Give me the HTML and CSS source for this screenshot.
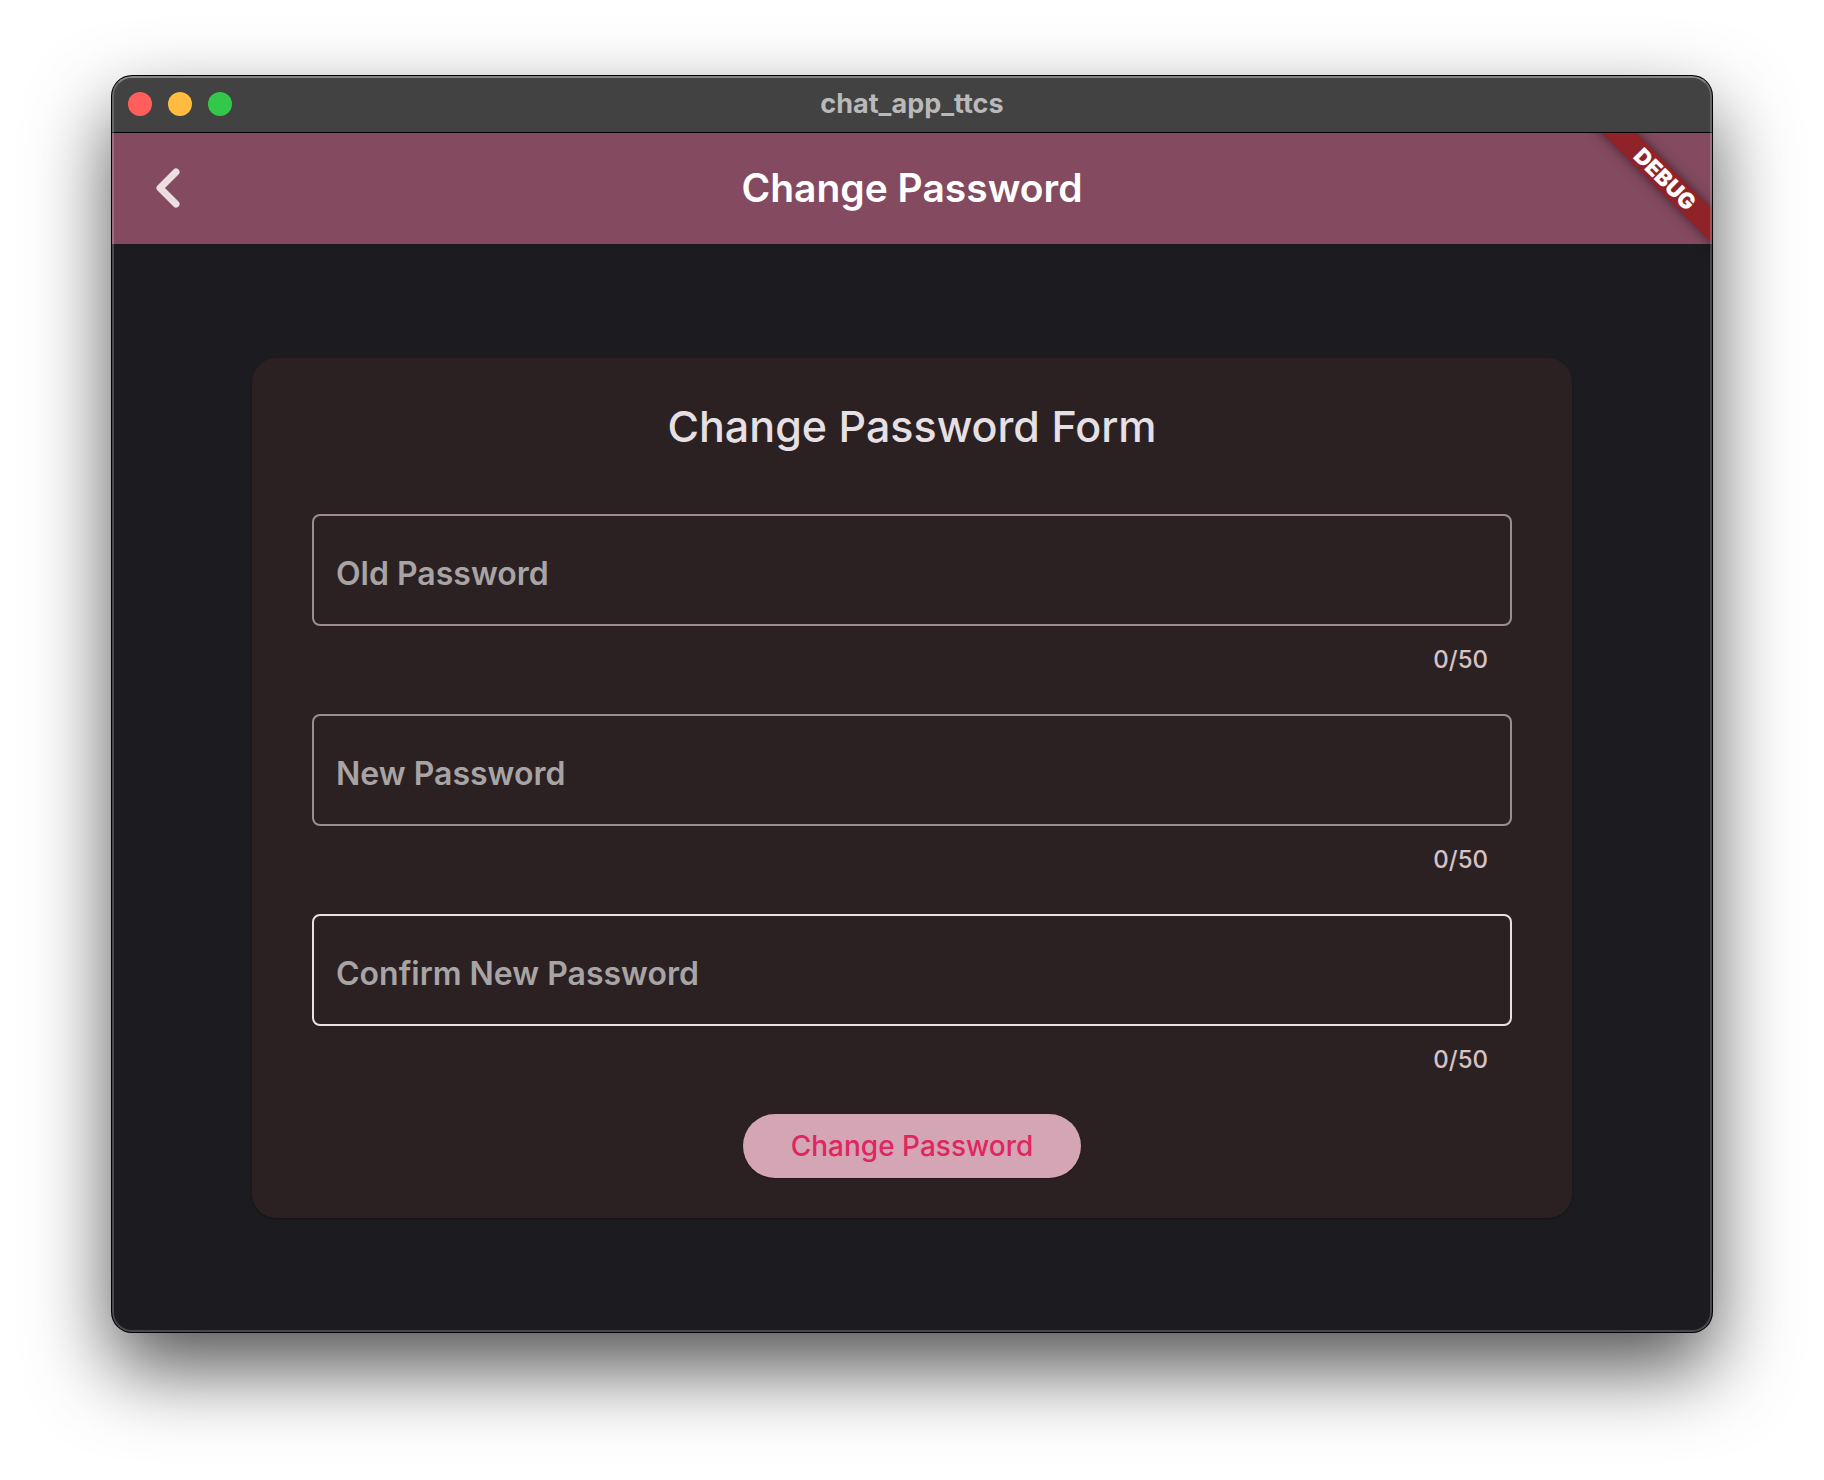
FILE: index.html
```html
<!DOCTYPE html>
<html lang="en">
<head>
  <meta charset="utf-8">
  <meta name="viewport" content="width=device-width, initial-scale=1">
  <title>chat_app_ttcs</title>
  <link rel="stylesheet" href="styles.css">
</head>
<body>
  <div class="window">
    <header class="titlebar">
      <div class="lights">
        <span class="light light--close"></span>
        <span class="light light--minimize"></span>
        <span class="light light--zoom"></span>
      </div>
      <span class="titlebar__title">chat_app_ttcs</span>
    </header>
    <div class="app">
      <nav class="appbar">
        <button class="back" type="button" aria-label="Back">
          <svg class="back__icon" viewBox="0 0 24 40" aria-hidden="true">
            <path d="M20 4 L4 20 L20 36" fill="none" stroke="currentColor" stroke-width="7" stroke-linecap="round" stroke-linejoin="round"/>
          </svg>
        </button>
        <h1 class="appbar__title">Change Password</h1>
      </nav>
      <main class="content">
        <form class="card">
          <h2 class="card__title">Change Password Form</h2>
          <div class="field">
            <div class="field__box">
              <label class="field__label" for="old">Old Password</label>
              <input class="field__input" id="old" type="password" maxlength="50">
            </div>
            <span class="field__counter">0/50</span>
          </div>
          <div class="field">
            <div class="field__box">
              <label class="field__label" for="new">New Password</label>
              <input class="field__input" id="new" type="password" maxlength="50">
            </div>
            <span class="field__counter">0/50</span>
          </div>
          <div class="field">
            <div class="field__box field__box--active">
              <label class="field__label" for="confirm">Confirm New Password</label>
              <input class="field__input" id="confirm" type="password" maxlength="50">
            </div>
            <span class="field__counter">0/50</span>
          </div>
          <button class="submit" type="submit">Change Password</button>
        </form>
      </main>
      <div class="banner"><span class="banner__ribbon">DEBUG</span></div>
    </div>
  </div>
</body>
</html>
```
FILE: styles.css
```css
* {
  box-sizing: border-box;
}

body {
  margin: 0;
  min-height: 100vh;
  padding: 76px 112px 148px;
  display: flex;
  background: #fff;
  font-family: Inter, "Liberation Sans", sans-serif;
}

button {
  border: 0;
  padding: 0;
  font: inherit;
  cursor: pointer;
}

.window {
  flex: 1;
  display: flex;
  flex-direction: column;
  position: relative;
  border-radius: 20px;
  overflow: hidden;
  background: #1c1b20;
  box-shadow: 0 0 0 1px #000, 0 36px 80px rgba(0, 0, 0, 0.68);
}

/* Light rim along the inside edge of the window */
.window::after {
  content: "";
  position: absolute;
  inset: 0;
  border: 2px solid rgba(255, 255, 255, 0.2);
  border-top-color: rgba(255, 255, 255, 0.35);
  border-radius: 20px;
  pointer-events: none;
}

.titlebar {
  height: 57px;
  padding: 0 16px;
  display: grid;
  grid-template-columns: 1fr auto 1fr;
  align-items: center;
  background: #424242;
  border-bottom: 1px solid #000;
}

.titlebar__title {
  color: #b9b9b9;
  font-size: 27px;
  line-height: 32px;
  font-weight: 700;
}

.lights {
  display: flex;
  gap: 16px;
}

.light {
  width: 24px;
  height: 24px;
  border-radius: 50%;
}

.light--close { background: #ff5f5a; }
.light--minimize { background: #ffbc40; }
.light--zoom { background: #34c84a; }

.app {
  flex: 1;
  display: flex;
  flex-direction: column;
  position: relative;
}

.appbar {
  height: 111px;
  padding: 0 40px 2px;
  display: grid;
  grid-template-columns: 1fr auto 1fr;
  align-items: center;
  background: #844a5f;
}

.back {
  display: flex;
  justify-self: start;
  color: #ecdfe2;
  background: none;
}

.back__icon {
  width: 32px;
  height: 40px;
}

.appbar__title {
  margin: 0;
  color: #fff;
  font-size: 39px;
  line-height: 48px;
  font-weight: 600;
}

.content {
  flex: 1;
  padding: 40px 140px;
  display: flex;
  align-items: center;
}

.card {
  flex: 1;
  padding: 40px 60px;
  display: flex;
  flex-direction: column;
  border-radius: 24px;
  background: #2c2122;
  box-shadow: 0 1px 2px rgba(0, 0, 0, 0.3);
}

.card__title {
  margin: 0 0 60px;
  color: #e6e0e5;
  font-size: 43px;
  line-height: 56px;
  font-weight: 450;
  text-align: center;
}

.field {
  height: 200px;
  display: flex;
  flex-direction: column;
}

.field__box {
  height: 112px;
  padding: 8px 22px 0;
  display: flex;
  align-items: center;
  gap: 16px;
  border: 2px solid #9e8c8f;
  border-radius: 8px;
}

.field__box--active {
  border-color: #ecdfe2;
}

.field__label {
  color: #a8a4a5;
  font-size: 32px;
  line-height: 40px;
  font-weight: 600;
}

.field__input {
  flex: 1;
  min-width: 0;
  border: 0;
  outline: 0;
  background: none;
  color: #ecdfe2;
  font: inherit;
  font-size: 32px;
}

.field__counter {
  margin: 16px 24px 0;
  color: #d5c2c6;
  font-size: 24px;
  line-height: 36px;
  font-weight: 500;
  text-align: right;
}

.submit {
  align-self: center;
  height: 64px;
  padding: 0 48px;
  border-radius: 32px;
  background: #d4a5b4;
  box-shadow: 0 1px 2px rgba(0, 0, 0, 0.3);
  color: #e0265f;
  font-size: 28px;
  font-weight: 500;
}

.banner {
  position: absolute;
  top: 0;
  right: 0;
  width: 180px;
  height: 180px;
  overflow: hidden;
  pointer-events: none;
}

.banner__ribbon {
  position: absolute;
  top: 34px;
  right: -53px;
  width: 200px;
  background: #8f2329;
  box-shadow: 0 0 12px rgba(0, 0, 0, 0.5);
  color: #fff;
  font-size: 22px;
  line-height: 24px;
  font-weight: 900;
  text-align: center;
  transform: rotate(45deg);
}
```
